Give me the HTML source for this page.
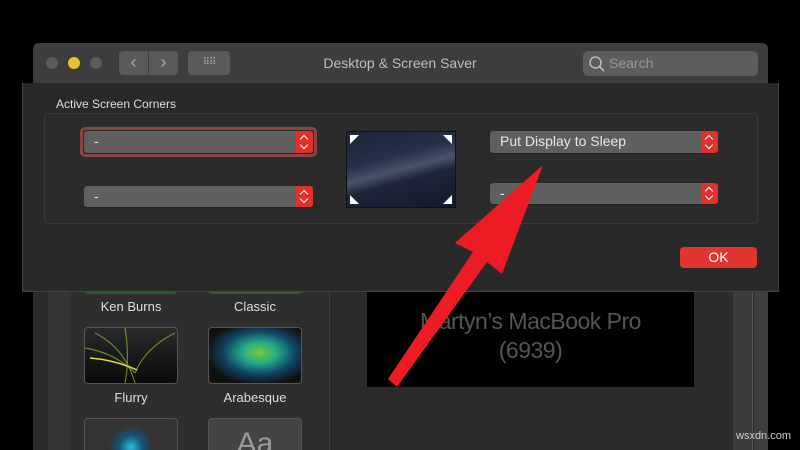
<!DOCTYPE html>
<html><head><meta charset="utf-8"><style>
*{margin:0;padding:0;box-sizing:border-box}
html,body{width:800px;height:450px;overflow:hidden}
body{background:#000;position:relative;font-family:"Liberation Sans",sans-serif}
.a{position:absolute}
.dd{position:absolute;background:#5f5f5f;border-radius:3px;color:#e6e6e6;font-size:14px;line-height:21px;padding-left:10px;box-shadow:0 1px 0 #222}
.dd .s{position:absolute;right:0;top:0;bottom:0;width:17px;background:#e0312b;border-radius:0 3px 3px 0}
.dd .s:before,.dd .s:after{content:"";position:absolute;left:5px;width:5px;height:5px;border:solid #fff;border-width:1.3px 1.3px 0 0}
.dd .s:before{top:5px;transform:rotate(-45deg)}
.dd .s:after{bottom:5px;transform:rotate(135deg)}
.lbl{position:absolute;color:#ddd;font-size:13px;text-align:center;width:94px}
</style></head><body>
<div class="a" style="left:33px;top:43px;width:735px;height:407px;background:#2b2b2b;border-radius:6px 6px 0 0"></div>
<div class="a" style="left:33px;top:43px;width:735px;height:40px;background:#3d3d3d;border-radius:6px 6px 0 0"></div>
<div class="a" style="left:46px;top:57px;width:12px;height:12px;border-radius:50%;background:#5c5c5c"></div>
<div class="a" style="left:68px;top:57px;width:12px;height:12px;border-radius:50%;background:#e8c22a"></div>
<div class="a" style="left:90px;top:57px;width:12px;height:12px;border-radius:50%;background:#5c5c5c"></div>
<div class="a" style="left:119px;top:51px;width:29px;height:24px;background:#5a5a5a;border-radius:4px 0 0 4px;color:#aaa;font-size:18px;text-align:center;line-height:22px">‹</div>
<div class="a" style="left:149px;top:51px;width:29px;height:24px;background:#5a5a5a;border-radius:0 4px 4px 0;color:#aaa;font-size:18px;text-align:center;line-height:22px">›</div>
<div class="a" style="left:188px;top:51px;width:42px;height:24px;background:#5a5a5a;border-radius:4px;color:#aaa;font-size:10px;text-align:center;line-height:24px;letter-spacing:-1px">⠿⠿</div>
<div class="a" style="left:250px;top:55px;width:300px;text-align:center;color:#bdbdbd;font-size:14px">Desktop &amp; Screen Saver</div>
<div class="a" style="left:583px;top:51px;width:175px;height:25px;background:#5c5c5c;border-radius:5px;color:#999;font-size:14px;line-height:25px;padding-left:26px">Search</div>
<svg class="a" style="left:588px;top:55px" width="18" height="18"><circle cx="7.5" cy="7.5" r="5.5" fill="none" stroke="#bbb" stroke-width="1.5"/><line x1="11.5" y1="11.5" x2="16" y2="16" stroke="#bbb" stroke-width="1.6"/></svg>
<!-- lower window -->
<div class="a" style="left:48px;top:290px;width:22px;height:160px;background:#333"></div>
<div class="a" style="left:70px;top:290px;width:260px;height:160px;background:#2e2e2e;border-right:1px solid #3f3f3f"></div>
<div class="a" style="left:733px;top:290px;width:20px;height:160px;background:#3b3b3b;border-right:1px solid #555"></div>
<div class="a" style="left:754px;top:290px;width:14px;height:160px;background:#3e3e3e"></div>
<div class="a" style="left:84px;top:286px;width:94px;height:8px;background:#2a5a2a;border-radius:0 0 4px 4px"></div>
<div class="a" style="left:208px;top:286px;width:94px;height:8px;background:#3a5a2a;border-radius:0 0 4px 4px"></div>
<div class="lbl" style="left:84px;top:299px">Ken Burns</div>
<div class="lbl" style="left:208px;top:299px">Classic</div>
<div class="a" style="left:84px;top:327px;width:94px;height:57px;border-radius:4px;border:1px solid #555;background:linear-gradient(#2a2a2a,#0a0a0a);overflow:hidden">
<svg width="92" height="55"><path d="M0 20 Q30 25 50 45 M10 5 Q40 20 50 55 M40 0 Q45 30 40 55 M90 5 Q60 20 50 45" stroke="#8b3" stroke-width="1.2" fill="none" opacity=".7"/><path d="M5 30 Q30 32 52 42" stroke="#dd4" stroke-width="1.5" fill="none"/></svg></div>
<div class="a" style="left:208px;top:327px;width:94px;height:57px;border-radius:4px;border:1px solid #555;background:radial-gradient(ellipse at 55% 45%,#7c3 0,#2a8 25%,#146 50%,#111 75%)"></div>
<div class="lbl" style="left:84px;top:390px">Flurry</div>
<div class="lbl" style="left:208px;top:390px">Arabesque</div>
<div class="a" style="left:84px;top:418px;width:94px;height:40px;border-radius:4px;border:1px solid #555;background:radial-gradient(circle at 50% 75%,#3bd 0,#157 22%,#333 40%)"></div>
<div class="a" style="left:208px;top:418px;width:94px;height:40px;border-radius:4px;border:1px solid #555;background:#444;color:#999;font-size:30px;text-align:center;line-height:50px">Aa</div>
<div class="a" style="left:367px;top:290px;width:327px;height:97px;background:#000;color:#555;font-size:23px;text-align:center;line-height:29px;padding-top:17px;letter-spacing:-0.5px">Martyn’s MacBook Pro<br>(6939)</div>
<!-- sheet -->
<div class="a" style="left:22px;top:83px;width:757px;height:209px;background:#292929;border:1px solid #444;border-top:none"></div>
<div class="a" style="left:56px;top:97px;color:#ddd;font-size:12px">Active Screen Corners</div>
<div class="a" style="left:44px;top:113px;width:714px;height:111px;border:1px solid #3a3a3a;border-radius:4px;background:#2b2b2b"></div>
<div class="a" style="left:80px;top:127px;width:237px;height:30px;border:3px solid #8a4444;border-radius:5px"></div>
<div class="dd" style="left:84px;top:131px;width:229px;height:22px">-<div class="s"></div></div>
<div class="dd" style="left:84px;top:186px;width:229px;height:21px">-<div class="s"></div></div>
<div class="dd" style="left:490px;top:131px;width:228px;height:22px">Put Display to Sleep<div class="s"></div></div>
<div class="dd" style="left:490px;top:183px;width:228px;height:21px">-<div class="s"></div></div>
<div class="a" style="left:346px;top:131px;width:110px;height:77px;background:linear-gradient(165deg,#1c2438 0%,#27304a 35%,#4a5268 50%,#1d2538 62%,#121a2c 100%);border:1px solid #111"></div>
<svg class="a" style="left:346px;top:131px" width="110" height="77"><polygon points="4,4 13,4 4,13" fill="#fff"/><polygon points="106,4 97,4 106,13" fill="#fff"/><polygon points="4,73 13,73 4,64" fill="#fff"/><polygon points="106,73 97,73 106,64" fill="#fff"/></svg>
<div class="a" style="left:680px;top:247px;width:77px;height:21px;background:#e0362f;border-radius:4px;color:#fff;font-size:14px;text-align:center;line-height:21px">OK</div>
<svg class="a" style="left:0;top:0" width="800" height="450"><polygon points="543,165 502,274 487,262 397,387 388,379 473,252 455,243" fill="#ed1c24"/></svg>
<div class="a" style="left:736px;top:430px;color:#ccc;font-size:11px">wsxdn.com</div>
</body></html>
